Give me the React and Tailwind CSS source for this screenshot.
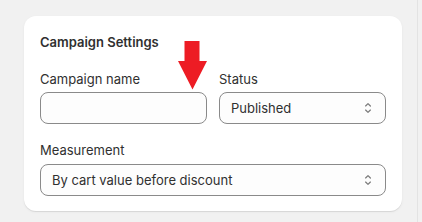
import React from "react";

function SelectIcon() {
  return (
    <svg viewBox="0 0 20 20" className="w-4 h-4 fill-[#7a7a7a]">
      <path d="M10.884 4.323a1.25 1.25 0 0 0-1.768 0l-2.646 2.647a.75.75 0 0 0 1.06 1.06l2.47-2.47 2.47 2.47a.75.75 0 1 0 1.06-1.06l-2.646-2.647Z" />
      <path d="m13.53 13.03-2.646 2.647a1.25 1.25 0 0 1-1.768 0l-2.646-2.647a.75.75 0 0 1 1.06-1.06l2.47 2.47 2.47-2.47a.75.75 0 0 1 1.06 1.06Z" />
    </svg>
  );
}

function Select({ value }) {
  return (
    <div className="h-8 rounded-lg border border-[#8a8a8a] bg-[#fdfdfd] flex items-center pl-[11px] pr-[9px]">
      <span className="flex-1 truncate">{value}</span>
      <SelectIcon />
    </div>
  );
}

export default function App() {
  return (
    <div className="w-[422px] h-[222px] bg-[#f1f1f1] flex font-['Inter','Noto_Sans',sans-serif] overflow-hidden">
      <div className="w-[417px] pt-4 pl-6">
        <div className="relative w-[378px] bg-white rounded-xl shadow-[0_1px_0_0_rgba(26,26,26,0.08),0_1px_3px_rgba(0,0,0,0.05)] px-4 pt-4 pb-[15px] text-[#303030] text-[13px] leading-5">
          <h2 className="font-semibold">Campaign Settings</h2>
          <div className="mt-[17px] grid grid-cols-2 gap-3">
            <div>
              <div className="mb-[3px]">Campaign name</div>
              <div className="h-8 rounded-lg border border-[#8a8a8a] bg-[#fdfdfd]" />
            </div>
            <div>
              <div className="mb-[3px]">Status</div>
              <Select value="Published" />
            </div>
          </div>
          <div className="mt-4">
            <div className="mb-1">Measurement</div>
            <Select value="By cart value before discount" />
          </div>
          <svg
            viewBox="0 0 29 49"
            className="absolute left-[154px] top-[25px] w-[29px] h-[49px]"
          >
            <polygon
              points="6.5,0 21.5,0 21.5,20 29,20 14.5,48.5 0,20 6.5,20"
              fill="#ed1c24"
            />
          </svg>
        </div>
      </div>
      <div className="w-px bg-[#e3e3e3]" />
    </div>
  );
}
